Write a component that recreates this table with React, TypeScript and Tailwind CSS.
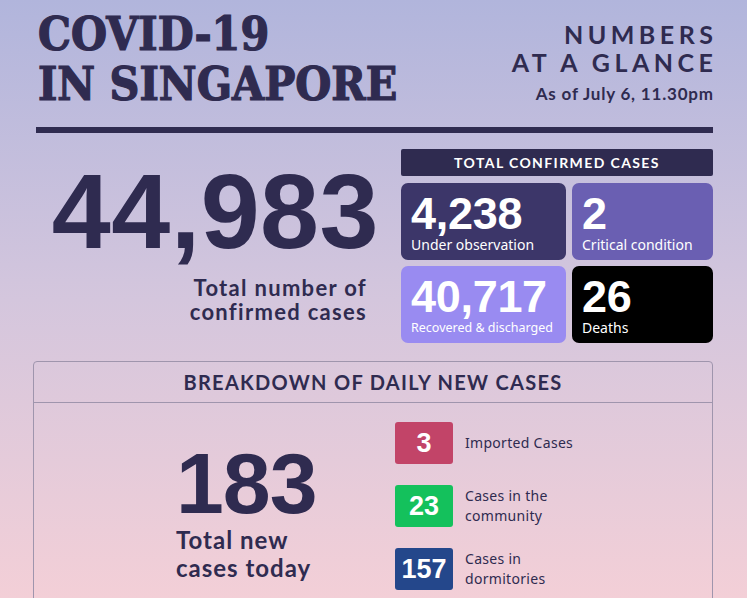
const ink = 'text-[#2f2b50]';

function StatCard({ value, label, bg, small }: { value: string; label: string; bg: string; small?: boolean }) {
  return (
    <div className={`${bg} h-[77px] rounded-[7px] px-[10px] pb-[6px] flex flex-col justify-end text-white`}>
      <div className="font-['Liberation_Sans',sans-serif] font-bold text-[45px] leading-[44px] tracking-[-0.3px]">{value}</div>
      <div
        className={`font-['Noto_Sans',sans-serif] leading-[18px] whitespace-nowrap ${
          small ? 'text-[12.5px]' : 'text-[14px]'
        }`}
      >
        {label}
      </div>
    </div>
  );
}

function Breakdown({ value, label, bg }: { value: string; label: string[]; bg: string }) {
  return (
    <div className="flex items-center gap-[12px]">
      <div className={`${bg} w-[58px] h-[42px] rounded-[3px] flex items-center justify-center text-white font-['Liberation_Sans',sans-serif] font-bold text-[27px]`}>
        {value}
      </div>
      <div className={`${ink} font-['Noto_Sans',sans-serif] text-[14px] leading-[20px] tracking-[0.3px]`}>
        {label.map((l) => (
          <div key={l}>{l}</div>
        ))}
      </div>
    </div>
  );
}

export default function App() {
  return (
    <div className="w-full h-[598px] overflow-hidden bg-gradient-to-b from-[#b1b5dc] via-[#d4c6dd] to-[#f3cfd7]">
      <div className="pl-[36px] pr-[34px]">
        {/* header */}
        <div className="flex justify-between items-start h-[127px] pt-[9px]">
          <h1
            className={`${ink} font-['DejaVu_Serif_Condensed','DejaVu_Serif',serif] [font-stretch:condensed] font-bold text-[46px] leading-[50px] pl-[2px] [-webkit-text-stroke:1.2px_#2f2b50]`}
          >
            COVID-19
            <br />
            IN SINGAPORE
          </h1>
          <div className={`${ink} text-right pt-[11px] font-['Lato',sans-serif] font-bold`}>
            <div className="text-[25px] leading-[28px] tracking-[4.5px] mr-[-4.5px]">NUMBERS</div>
            <div className="text-[25px] leading-[28px] tracking-[4.5px] mr-[-4.5px]">AT A GLANCE</div>
            <div className="text-[17px] leading-[20px] mt-[8px] tracking-[0.8px] mr-[-0.8px]">As of July 6, 11.30pm</div>
          </div>
        </div>
        <div className="h-[6px] bg-[#2f2b50]" />

        {/* totals */}
        <div className="flex mt-[16px]">
          <div className="w-[343px] flex flex-col items-end pt-[12px]">
            <div className={`${ink} font-['Liberation_Sans',sans-serif] font-bold text-[106px] leading-[100px] tracking-[0.5px]`}>44,983</div>
            <div className={`${ink} font-['Lato',sans-serif] font-bold text-[22px] leading-[24px] tracking-[1.3px] text-right mt-[15px] mr-[12px]`}>
              Total number of
              <br />
              confirmed cases
            </div>
          </div>
          <div className="w-[312px] ml-auto flex flex-col gap-[7px]">
            <div className="h-[27px] bg-[#2f2b50] rounded-[2px] flex items-center justify-center text-white font-['Lato',sans-serif] font-bold text-[14px] tracking-[1.4px]">
              TOTAL CONFIRMED CASES
            </div>
            <div className="grid grid-cols-[165px_1fr] gap-[6px]">
              <StatCard value="4,238" label="Under observation" bg="bg-[#3c3669]" />
              <StatCard value="2" label="Critical condition" bg="bg-[#6a5fb2]" />
              <StatCard value="40,717" label="Recovered & discharged" bg="bg-[#998bf1]" small />
              <StatCard value="26" label="Deaths" bg="bg-black" />
            </div>
          </div>
        </div>
      </div>

      {/* breakdown */}
      <div className="ml-[33px] mr-[34px] mt-[18px] border border-[#9f95ad] rounded-[4px]">
        <div className={`${ink} h-[41px] flex items-center justify-center border-b border-[#9f95ad] font-['Lato',sans-serif] font-bold text-[20px] tracking-[1.3px]`}>
          BREAKDOWN OF DAILY NEW CASES
        </div>
        <div className="flex pt-[19px] pb-[20px]">
          <div className="w-[361px] pl-[142px] pt-[21px]">
            <div className={`${ink} font-['Liberation_Sans',sans-serif] font-bold text-[86px] leading-[80px] tracking-[-1px]`}>183</div>
            <div className={`${ink} font-['Lato',sans-serif] font-bold text-[24px] leading-[28px] tracking-[1px] whitespace-nowrap mt-[3px]`}>
              Total new
              <br />
              cases today
            </div>
          </div>
          <div className="flex flex-col gap-[21px]">
            <Breakdown value="3" label={['Imported Cases']} bg="bg-[#c24468]" />
            <Breakdown value="23" label={['Cases in the', 'community']} bg="bg-[#14c15c]" />
            <Breakdown value="157" label={['Cases in', 'dormitories']} bg="bg-[#24478b]" />
          </div>
        </div>
      </div>
    </div>
  );
}
